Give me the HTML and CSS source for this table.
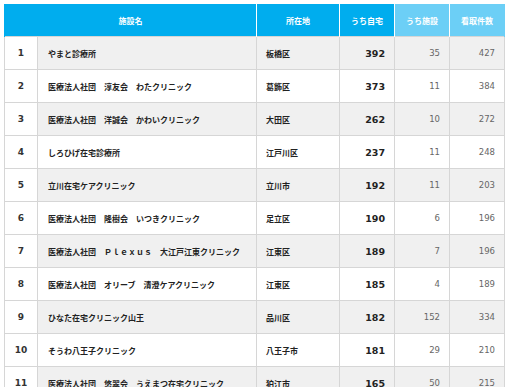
FILE: index.html
```html
<!DOCTYPE html>
<html lang="ja">
<head>
<meta charset="utf-8">
<link rel="stylesheet" href="styles.css">
</head>
<body>
<table class="rank">
  <colgroup>
    <col class="c-no"><col class="c-name"><col class="c-loc"><col class="c-num"><col class="c-num"><col class="c-num">
  </colgroup>
  <thead>
    <tr>
      <th colspan="2">施設名</th>
      <th>所在地</th>
      <th>うち自宅</th>
      <th class="light">うち施設</th>
      <th class="light">看取件数</th>
    </tr>
  </thead>
  <tbody>
    <tr><td class="no">1</td><td class="name">やまと診療所</td><td class="loc">板橋区</td><td class="home">392</td><td class="sub">35</td><td class="sub">427</td></tr>
    <tr><td class="no">2</td><td class="name">医療法人社団　淳友会　わたクリニック</td><td class="loc">葛飾区</td><td class="home">373</td><td class="sub">11</td><td class="sub">384</td></tr>
    <tr><td class="no">3</td><td class="name">医療法人社団　洋誠会　かわいクリニック</td><td class="loc">大田区</td><td class="home">262</td><td class="sub">10</td><td class="sub">272</td></tr>
    <tr><td class="no">4</td><td class="name">しろひげ在宅診療所</td><td class="loc">江戸川区</td><td class="home">237</td><td class="sub">11</td><td class="sub">248</td></tr>
    <tr><td class="no">5</td><td class="name">立川在宅ケアクリニック</td><td class="loc">立川市</td><td class="home">192</td><td class="sub">11</td><td class="sub">203</td></tr>
    <tr><td class="no">6</td><td class="name">医療法人社団　隆樹会　いつきクリニック</td><td class="loc">足立区</td><td class="home">190</td><td class="sub">6</td><td class="sub">196</td></tr>
    <tr><td class="no">7</td><td class="name">医療法人社団　Ｐｌｅｘｕｓ　大江戸江東クリニック</td><td class="loc">江東区</td><td class="home">189</td><td class="sub">7</td><td class="sub">196</td></tr>
    <tr><td class="no">8</td><td class="name">医療法人社団　オリーブ　清澄ケアクリニック</td><td class="loc">江東区</td><td class="home">185</td><td class="sub">4</td><td class="sub">189</td></tr>
    <tr><td class="no">9</td><td class="name">ひなた在宅クリニック山王</td><td class="loc">品川区</td><td class="home">182</td><td class="sub">152</td><td class="sub">334</td></tr>
    <tr><td class="no">10</td><td class="name">そうわ八王子クリニック</td><td class="loc">八王子市</td><td class="home">181</td><td class="sub">29</td><td class="sub">210</td></tr>
    <tr><td class="no">11</td><td class="name">医療法人社団　悠翠会　うえまつ在宅クリニック</td><td class="loc">狛江市</td><td class="home">165</td><td class="sub">50</td><td class="sub">215</td></tr>
  </tbody>
</table>
</body>
</html>
```

FILE: styles.css
```css
html, body {
  margin: 0;
  padding: 0;
  background: #ffffff;
}
body {
  padding: 4px;
  font-family: "DejaVu Sans", "Noto Sans CJK JP", sans-serif;
  color: #222222;
}
.rank {
  border-collapse: collapse;
  table-layout: fixed;
  width: 500px;
}
.c-no { width: 33px; }
.c-name { width: 219px; }
.c-loc { width: 83px; }
.c-num { width: 55px; }
.rank th {
  height: 32px;
  padding: 0;
  background: #00adee;
  color: #ffffff;
  font-family: "Noto Sans CJK JP", sans-serif;
  font-size: 8px;
  font-weight: 700;
  text-align: center;
  border-left: 1px solid #ffffff;
  border-right: 1px solid #ffffff;
}
.rank th:first-child { border-left: 1px solid #00adee; }
.rank th:last-child { border-right: 1px solid #6ccff6; }
.rank th.light { background: #6ccff6; }
.rank td {
  height: 32px;
  padding: 0 9px;
  border: 1px solid #d6d6d6;
  font-size: 8px;
  white-space: nowrap;
  overflow: hidden;
}
.rank tbody tr:nth-child(odd) td { background: #f0f0f0; }
.rank tbody tr:nth-child(odd) td.no { background: #ffffff; }
.rank td.no {
  padding: 0;
  text-align: center;
  font-weight: 700;
  font-size: 9px;
  color: #333333;
}
.rank td.name, .rank td.loc {
  font-family: "Noto Sans CJK JP", sans-serif;
  font-weight: 700;
  text-align: left;
  color: #222222;
}
.rank td.name { padding-left: 10px; }
.rank td.home {
  text-align: right;
  font-weight: 700;
  font-size: 9.5px;
  color: #222222;
}
.rank td.sub {
  text-align: right;
  font-size: 8.5px;
  color: #666666;
}
```
